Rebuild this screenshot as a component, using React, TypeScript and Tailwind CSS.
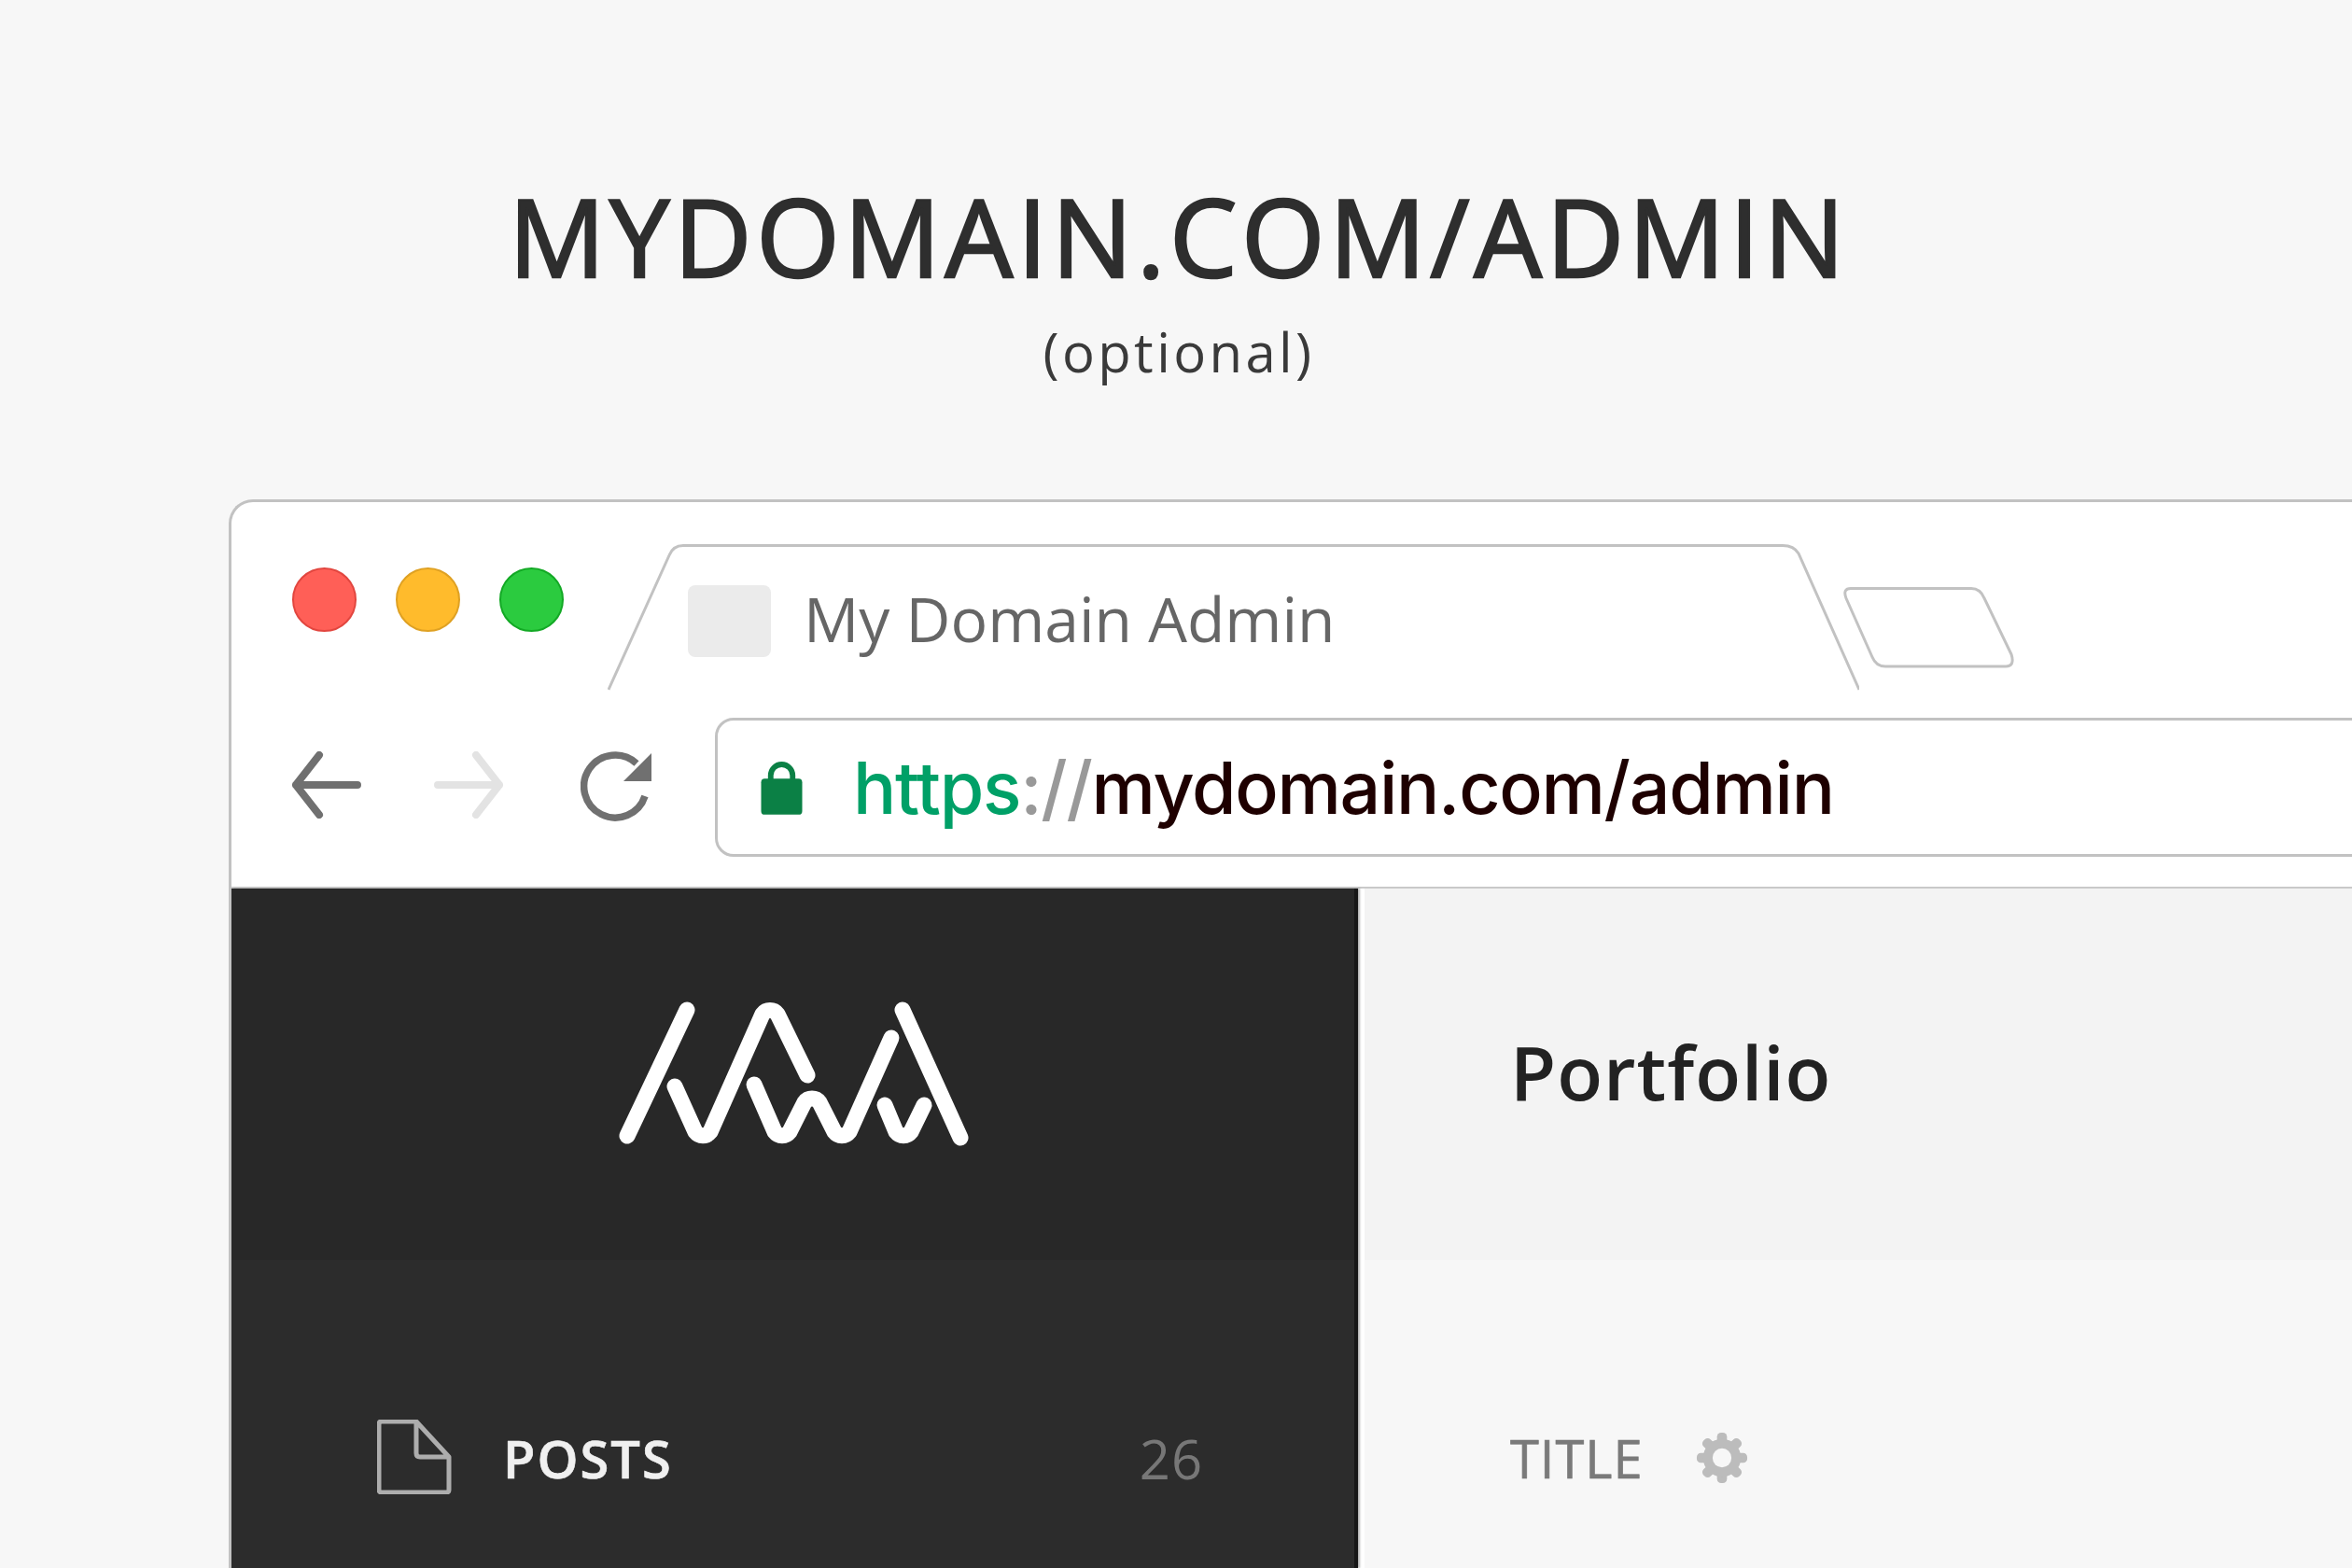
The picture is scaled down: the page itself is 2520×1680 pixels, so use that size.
const Gear = () => (
  <svg width="56" height="56" viewBox="0 0 58 58" className="block">
    {[0, 45, 90, 135, 180, 225, 270, 315].map((a) => (
      <rect key={a} x="23.5" y="1" width="11" height="14" rx="4.5" fill="#bcbcbc" transform={`rotate(${a} 29 29)`} />
    ))}
    <circle cx="29" cy="29" r="21" fill="#bcbcbc" />
    <circle cx="29" cy="29" r="10.5" fill="#f7f7f7" />
  </svg>
);

const Arrow = ({ color, flip }: { color: string; flip?: boolean }) => (
  <svg width="74" height="72" viewBox="0 0 74 72" className={flip ? "block -scale-x-100" : "block"}>
    <path d="M4 36H70M29 4L4 36L29 68" fill="none" stroke={color} strokeWidth="8" strokeLinecap="round" strokeLinejoin="round" />
  </svg>
);

export default function App() {
  return (
    <div className="w-[2520px] h-[1680px] overflow-hidden bg-[#f7f7f7] font-['Open_Sans',sans-serif]">
      <div className="flex flex-col items-center pl-[6px] pt-[183px] h-[535px]">
        <div className="text-[115px] leading-[140px] [-webkit-text-stroke:2.5px_#2e2e2e] tracking-[4.7px] text-[#2e2e2e] whitespace-nowrap">MYDOMAIN.COM/ADMIN</div>
        <div className="text-[58px] leading-[60px] tracking-[3.4px] text-[#3a3a3a] mt-[24px]">(optional)</div>
      </div>

      <div className="ml-[245px] w-[2400px] h-[1145px] flex flex-col border-l-[3px] border-t-[3px] border-[#c2c2c2] rounded-tl-[26px] bg-white">
        <div className="h-[414px] border-b-2 border-[#c9c9c9] flex flex-col shrink-0">
          <div className="h-[231px] flex items-start shrink-0">
            <div className="flex gap-[42px] pl-[65px] pt-[70px]">
              <div className="w-[69px] h-[69px] rounded-full bg-[#ff5f57] border-2 border-[#e2463f]" />
              <div className="w-[69px] h-[69px] rounded-full bg-[#ffbb2c] border-2 border-[#dfa123]" />
              <div className="w-[69px] h-[69px] rounded-full bg-[#2bcb3f] border-2 border-[#13a925]" />
            </div>
            <div className="relative ml-[47px] mt-[45px] w-[1341px] h-[157px] shrink-0 flex items-start pl-[86px] pt-[41px]">
              <svg width="1341" height="157" viewBox="0 0 1341 157" className="absolute left-0 top-0">
                <path d="M1 156L66 12Q70 1.5 81 1.5H1259Q1271 1.5 1276 10L1341 156" fill="none" stroke="#c2c2c2" strokeWidth="3" />
              </svg>
              <div className="w-[89px] h-[77px] rounded-lg bg-[#ebebeb] shrink-0 mt-[3px]" />
              <div className="ml-[35px] text-[66px] leading-[77px] tracking-normal text-[#666666] whitespace-nowrap">My Domain Admin</div>
            </div>
            <svg width="185" height="87" viewBox="0 0 185 87" className="block ml-[-17px] mt-[91px] shrink-0">
              <path d="M8 1.5H137Q147 1.5 151 12L180 72Q184 85 174 85H45Q35 85 31 75L3 12Q-1 1.5 8 1.5Z" fill="none" stroke="#c2c2c2" strokeWidth="3" />
            </svg>
          </div>
          <div className="flex items-start">
            <div className="flex items-center ml-[65px] h-[149px]">
              <div className="mb-[5px]"><Arrow color="#707070" /></div>
              <div className="ml-[78px] mb-[5px]"><Arrow color="#e3e3e3" flip /></div>
              <svg width="78" height="78" viewBox="0 0 78 78" className="block ml-[83px]">
                <path d="M69 48A33.5 33.5 0 1 1 60 13" fill="none" stroke="#707070" strokeWidth="7.5" />
                <path d="M76 2V32H46Z" fill="#707070" />
              </svg>
            </div>
            <div className="ml-[66px] w-[1800px] h-[149px] border-[3px] border-[#c2c2c2] rounded-[20px] flex items-center pl-[46px] shrink-0">
              <svg width="45" height="60" viewBox="0 0 46 60" className="block shrink-0">
                <path d="M11 24V16.5A11.5 11.5 0 0 1 35 16.5V24" fill="none" stroke="#0b8045" strokeWidth="6" />
                <rect x="0.5" y="20" width="45" height="39.5" rx="4" fill="#0b8045" />
              </svg>
              <div className="ml-[54px] text-[77px] leading-[100px] font-medium tracking-[-1.3px] font-['Inter',sans-serif] whitespace-nowrap text-[#1e0000]">
                <span className="text-[#00a067]">https</span>
                <span className="text-[#999999]">://</span>
                mydomain.com/admin
              </div>
            </div>
          </div>
        </div>

        <div className="flex flex-1 min-h-0">
          <div className="relative z-10 w-[1207px] shrink-0 bg-[#2c2c2c] border-r-[4px] border-[#171717] shadow-[2px_0_2px_rgba(0,0,0,0.3)] flex flex-col">
            <div className="h-[398px] bg-[#282828] pt-[87px] flex justify-center shrink-0">
              <svg width="420" height="200" viewBox="0 0 420 200" className="block blur-[0.6px]">
                <g fill="none" stroke="#ffffff" strokeWidth="17" strokeLinecap="round" strokeLinejoin="round">
                  <path d="M32 178L96 43" />
                  <path d="M83 125L105 173.7A10 10 0 0 0 121 173.7L177 47.5A10 10 0 0 1 193 47.5L225 113" />
                  <path d="M168 123L190 173.7A10 10 0 0 0 206 173.7L222 142A10 10 0 0 1 238 142L254 173.7A10 10 0 0 0 270 173.7L315 73" />
                  <path d="M308 145L320 173.7A10 10 0 0 0 336 173.7L350 145" />
                  <path d="M327 43L389 180" />
                </g>
              </svg>
            </div>
            <div className="flex items-center pl-[156px] mt-[170px] h-[84px] blur-[0.6px]">
              <svg width="80" height="80" viewBox="0 0 80 80" className="block shrink-0 mb-[3px]">
                <path d="M2 5Q2 2 5 2H42L77 40V75Q77 78 74 78H5Q2 78 2 75ZM42 2V36Q42 40 46 40H77" fill="none" stroke="#adadad" strokeWidth="5" strokeLinejoin="round" />
              </svg>
              <div className="ml-[55px] text-[56px] font-semibold [-webkit-text-stroke:0.7px_#f0f0f0] tracking-[2px] text-[#f0f0f0]">POSTS</div>
              <div className="ml-[500px] text-[58px] tracking-[1px] text-[#777777]">26</div>
            </div>
          </div>
          <div className="flex-1 min-w-0 flex flex-col bg-[#f7f7f7] border-l-[7px] border-white">
            <div className="h-[398px] bg-[#f3f3f3] pl-[156px] pb-[6px] flex items-center shrink-0">
              <div className="text-[80px] font-semibold tracking-[1px] text-[#222222] blur-[0.5px]">Portfolio</div>
            </div>
            <div className="flex items-center pl-[156px] mt-[170px] h-[84px] blur-[0.6px]">
              <div className="text-[56px] [-webkit-text-stroke:0.7px_#7a7a7a] tracking-[1px] text-[#7a7a7a]">TITLE</div>
              <div className="ml-[56px]"><Gear /></div>
            </div>
          </div>
        </div>
      </div>
    </div>
  );
}
